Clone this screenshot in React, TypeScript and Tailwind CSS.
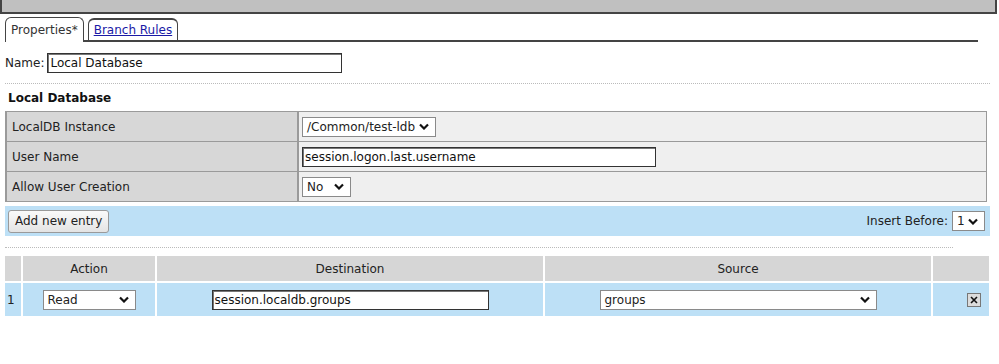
import React from "react";

const font = { fontFamily: '"DejaVu Sans", Verdana, sans-serif' };

const Chevron = () => (
  <svg width="10" height="7" viewBox="0 0 10 7" className="shrink-0">
    <path d="M1 1.5 L5 5.5 L9 1.5" fill="none" stroke="#111" strokeWidth="2.2" />
  </svg>
);

const Select = ({ value, className }: { value: string; className: string }) => (
  <div
    className={`flex h-[20px] items-center justify-between border border-[#8a8a8a] bg-white pl-[4px] pr-[6px] text-[12px] text-[#222] ${className}`}
  >
    <span>{value}</span>
    <Chevron />
  </div>
);

const TextInput = ({ value, className }: { value: string; className: string }) => (
  <div
    className={`flex h-[20px] items-center border border-[#333] bg-white pl-[2px] text-[12px] text-[#111] shadow-[inset_1px_1px_0_#777] ${className}`}
  >
    {value}
  </div>
);

const propRows = [
  { label: "LocalDB Instance", field: <Select value="/Common/test-ldb" className="w-[134px]" /> },
  { label: "User Name", field: <TextInput value="session.logon.last.username" className="w-[354px]" /> },
  { label: "Allow User Creation", field: <Select value="No" className="w-[49px]" /> },
];

export default function App() {
  return (
    <div className="min-h-screen bg-white text-[12px] text-[#222]" style={font}>
      {/* top bar */}
      <div className="mr-[2px] h-[14px] border-x-2 border-b-2 border-[#444] bg-[#c0c0c0]" />

      {/* tabs */}
      <div className="mx-[5px] mr-[21px] mt-[3px] flex items-end gap-[4px] border-b-2 border-[#444]">
        <div className="-mb-[2px] flex h-[25px] items-center rounded-t-[6px] border-x border-t border-[#444] bg-white px-[5px] text-[#333]">
          Properties*
        </div>
        <div className="mb-0 flex h-[22px] items-center rounded-t-[6px] border-x border-t-2 border-[#444] bg-white px-[5px] text-[#1a1aa6] underline">
          Branch Rules
        </div>
      </div>

      {/* name */}
      <div className="ml-[5px] mt-[11px] flex items-center gap-[3px]">
        <span>Name:</span>
        <TextInput value="Local Database" className="w-[295px]" />
      </div>

      <div className="mx-[5px] mr-[9px] mt-[10px] border-t border-dotted border-[#bbb]" />

      <div className="ml-[8px] mt-[5px] font-bold text-[#111]">Local Database</div>

      {/* properties table */}
      <div className="ml-[5px] mr-[12px] mt-[4px] border-l-2 border-t border-[#9a9a9a]">
        {propRows.map((r) => (
          <div key={r.label} className="grid h-[30px] grid-cols-[292px_1fr]">
            <div className="flex items-center border-b border-r-2 border-[#9a9a9a] bg-[#d7d7d7] pl-[5px]">{r.label}</div>
            <div className="flex items-center border-b border-r border-[#9a9a9a] bg-[#efefef] pl-[3px]">{r.field}</div>
          </div>
        ))}
      </div>

      {/* add entry bar */}
      <div className="ml-[5px] mr-[9px] mt-[4px] flex h-[30px] items-center justify-between bg-[#bde0f6] pl-[3px] pr-[5px]">
        <button className="h-[23px] rounded-[3px] border border-[#9a9a9a] bg-gradient-to-b from-[#fafafa] to-[#e4e4e4] px-[6px] text-[12px] text-[#222]">
          Add new entry
        </button>
        <div className="flex items-center gap-[4px]">
          <span>Insert Before:</span>
          <Select value="1" className="w-[33px]" />
        </div>
      </div>

      <div className="ml-[5px] mr-[46px] mt-[11px] border-t border-dotted border-[#bbb]" />

      {/* entries table */}
      <div className="ml-[4px] mt-[7px] grid w-[985px] grid-cols-[16px_132px_386px_386px_56px] gap-[2px] p-[1px]">
        <div className="h-[25px] bg-[#d6d6d6]" />
        <div className="flex h-[25px] items-center justify-center bg-[#d6d6d6] text-[#222]">Action</div>
        <div className="flex h-[25px] items-center justify-center bg-[#d6d6d6] text-[#222]">Destination</div>
        <div className="flex h-[25px] items-center justify-center bg-[#d6d6d6] text-[#222]">Source</div>
        <div className="h-[25px] bg-[#d6d6d6]" />

        <div className="flex h-[33px] items-center bg-[#bde0f6] pl-[2px]">1</div>
        <div className="flex h-[33px] items-center justify-center bg-[#bde0f6]">
          <Select value="Read" className="w-[93px]" />
        </div>
        <div className="flex h-[33px] items-center justify-center bg-[#bde0f6]">
          <TextInput value="session.localdb.groups" className="w-[277px]" />
        </div>
        <div className="flex h-[33px] items-center justify-center bg-[#bde0f6]">
          <Select value="groups" className="w-[277px]" />
        </div>
        <div className="flex h-[33px] items-center justify-end bg-[#bde0f6] pr-[8px]">
          <div className="flex h-[14px] w-[14px] items-center justify-center border border-[#777] bg-[#dcdcdc]">
            <svg width="8" height="8" viewBox="0 0 8 8">
              <path d="M1 1 L7 7 M7 1 L1 7" stroke="#111" strokeWidth="1.6" />
            </svg>
          </div>
        </div>
      </div>
    </div>
  );
}
